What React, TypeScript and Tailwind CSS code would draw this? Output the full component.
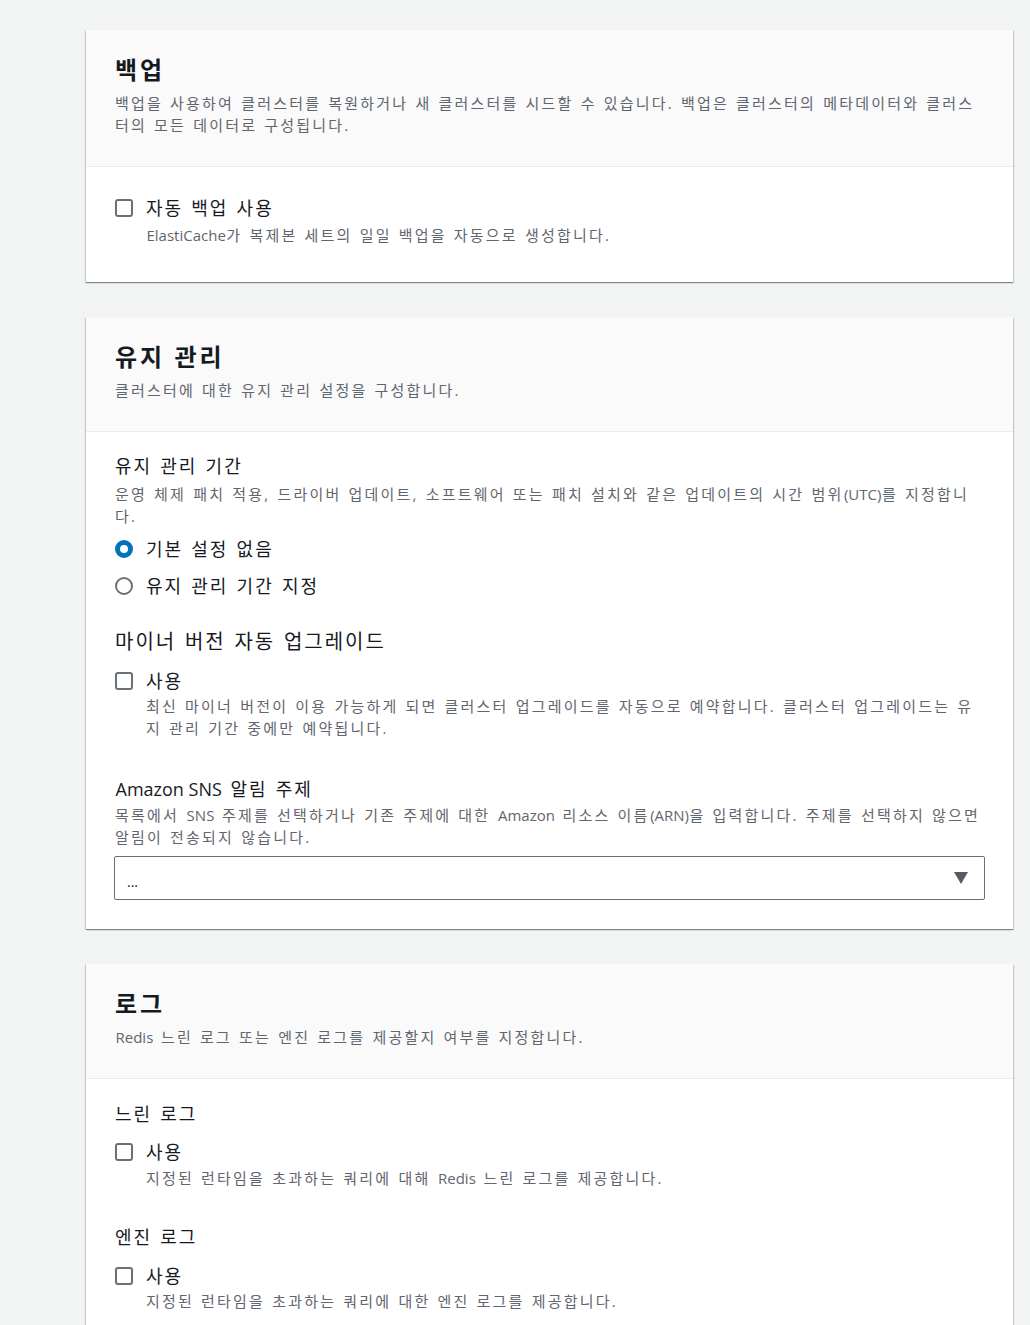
import { type FC, type ReactNode } from 'react';

const font = { fontFamily: '"Open Sans", "Noto Sans CJK KR", sans-serif' };

// Korean runs are spaced out to match the reference; [Latin] runs keep normal spacing
const Txt: FC<{ text: string; ko: string }> = ({ text, ko }) => (
    <>
        {text.split(/\[(.*?)\]/).map((part, i) =>
            part === '' ? null : (
                <span key={i} className={i % 2 ? 'inline-block mx-[0.5px] tracking-normal' : ko}>
                    {part}
                </span>
            )
        )}
    </>
);

const descKo = 'tracking-[2.2px] [word-spacing:1px]';
const labelKo = 'tracking-[2px] [word-spacing:1.5px]';
const descCls = 'text-[15px] leading-[22px] text-[#5f666f]';
const labelCls = 'text-[18px] leading-[26px] text-[#16191f]';

// each line is laid out on its own so the breaks fall where the reference has them
const Desc: FC<{ lines: string[]; className?: string }> = ({ lines, className = '' }) => (
    <div className={`flex flex-col ${descCls} ${className}`}>
        {lines.map((l, i) => (
            <span key={i} className="whitespace-nowrap">
                <Txt text={l} ko={descKo} />
            </span>
        ))}
    </div>
);

const Label: FC<{ text: string; className?: string }> = ({ text, className = '' }) => (
    <p className={`${labelCls} ${className}`}>
        <Txt text={text} ko={labelKo} />
    </p>
);

const Checkbox: FC = () => (
    <span className="mt-[4px] h-[18px] w-[18px] shrink-0 rounded-[3px] border-2 border-[#687078] bg-white"></span>
);

const Radio: FC<{ checked?: boolean }> = ({ checked }) =>
    checked ? (
        <span className="mt-[4px] h-[18px] w-[18px] shrink-0 rounded-full border-[5px] border-[#0073bb] bg-white"></span>
    ) : (
        <span className="mt-[4px] h-[18px] w-[18px] shrink-0 rounded-full border-2 border-[#687078] bg-white"></span>
    );

const CheckRow: FC<{ label: string; desc: string[]; gap?: string }> = ({ label, desc, gap = 'mt-0' }) => (
    <div className="flex gap-[13px]">
        <Checkbox />
        <div className="flex flex-col">
            <Label text={label} />
            <Desc lines={desc} className={gap} />
        </div>
    </div>
);

const Card: FC<{ title: string; desc: string[]; children: ReactNode; bodyClass: string }> = ({ title, desc, children, bodyClass }) => (
    <section className="w-[927px] bg-white shadow-[0_1px_1px_0_rgba(0,28,36,0.3),1px_1px_1px_0_rgba(0,28,36,0.15),-1px_1px_1px_0_rgba(0,28,36,0.15)]">
        <header className="flex flex-col gap-[7px] border-b border-[#eaeded] bg-[#fafafa] px-[29px] pt-[25px] pb-[30px]">
            <h2 className="text-[24px] font-bold leading-[30px] tracking-[3px] text-[#16191f]">{title}</h2>
            <Desc lines={desc} />
        </header>
        <div className={`flex flex-col px-[29px] ${bodyClass}`}>{children}</div>
    </section>
);

export default function App() {
    return (
        <div style={font} className="min-h-[1325px] bg-[#f2f3f3] pl-[86px] pt-[30px] pb-[40px]">
            <div className="flex flex-col gap-[35px]">
                <Card
                    title="백업"
                    desc={[
                        '백업을 사용하여 클러스터를 복원하거나 새 클러스터를 시드할 수 있습니다. 백업은 클러스터의 메타데이터와 클러스',
                        '터의 모든 데이터로 구성됩니다.',
                    ]}
                    bodyClass="pt-[28px] pb-[36px]"
                >
                    <CheckRow label="자동 백업 사용" desc={['[ElastiCache]가 복제본 세트의 일일 백업을 자동으로 생성합니다.']} gap="mt-[3px]" />
                </Card>

                <Card title="유지 관리" desc={['클러스터에 대한 유지 관리 설정을 구성합니다.']} bodyClass="pt-[21px] pb-[29px]">
                    <Label text="유지 관리 기간" />
                    <Desc
                        className="mt-[4px]"
                        lines={['운영 체제 패치 적용, 드라이버 업데이트, 소프트웨어 또는 패치 설치와 같은 업데이트의 시간 범위[(UTC)]를 지정합니', '다.']}
                    />
                    <div className="mt-[9px] flex flex-col gap-[11px]">
                        <div className="flex gap-[13px]">
                            <Radio checked />
                            <Label text="기본 설정 없음" />
                        </div>
                        <div className="flex gap-[13px]">
                            <Radio />
                            <Label text="유지 관리 기간 지정" />
                        </div>
                    </div>

                    <Label className="mt-[30px] !text-[20px]" text="마이너 버전 자동 업그레이드" />
                    <div className="mt-[13px]">
                        <CheckRow
                            label="사용"
                            desc={[
                                '최신 마이너 버전이 이용 가능하게 되면 클러스터 업그레이드를 자동으로 예약합니다. 클러스터 업그레이드는 유',
                                '지 관리 기간 중에만 예약됩니다.',
                            ]}
                            gap="mt-[1px]"
                        />
                    </div>

                    <Label className="mt-[37px]" text="[Amazon SNS] 알림 주제" />
                    <Desc
                        className="mt-[2px]"
                        lines={[
                            '목록에서 [SNS] 주제를 선택하거나 기존 주제에 대한 [Amazon] 리소스 이름[(ARN)]을 입력합니다. 주제를 선택하지 않으면',
                            '알림이 전송되지 않습니다.',
                        ]}
                    />
                    <div className="mt-[8px] flex h-[44px] w-[871px] -ml-[1px] items-center justify-between rounded-[2px] border border-[#687078] bg-white pl-[12px] pr-[16px]">
                        <span className="pt-[6px] text-[14px] text-[#16191f]">...</span>
                        <svg width="14" height="12" viewBox="0 0 14 12">
                            <path d="M0 0 H14 L7 12 Z" fill="#545b64" />
                        </svg>
                    </div>
                </Card>

                <Card title="로그" desc={['[Redis] 느린 로그 또는 엔진 로그를 제공할지 여부를 지정합니다.']} bodyClass="pt-[22px] pb-[30px]">
                    <Label text="느린 로그" />
                    <div className="mt-[12px]">
                        <CheckRow label="사용" desc={['지정된 런타임을 초과하는 쿼리에 대해 [Redis] 느린 로그를 제공합니다.']} gap="mt-[2px]" />
                    </div>
                    <Label className="mt-[35px]" text="엔진 로그" />
                    <div className="mt-[13px]">
                        <CheckRow label="사용" desc={['지정된 런타임을 초과하는 쿼리에 대한 엔진 로그를 제공합니다.']} gap="mt-[1px]" />
                    </div>
                </Card>
            </div>
        </div>
    );
}
